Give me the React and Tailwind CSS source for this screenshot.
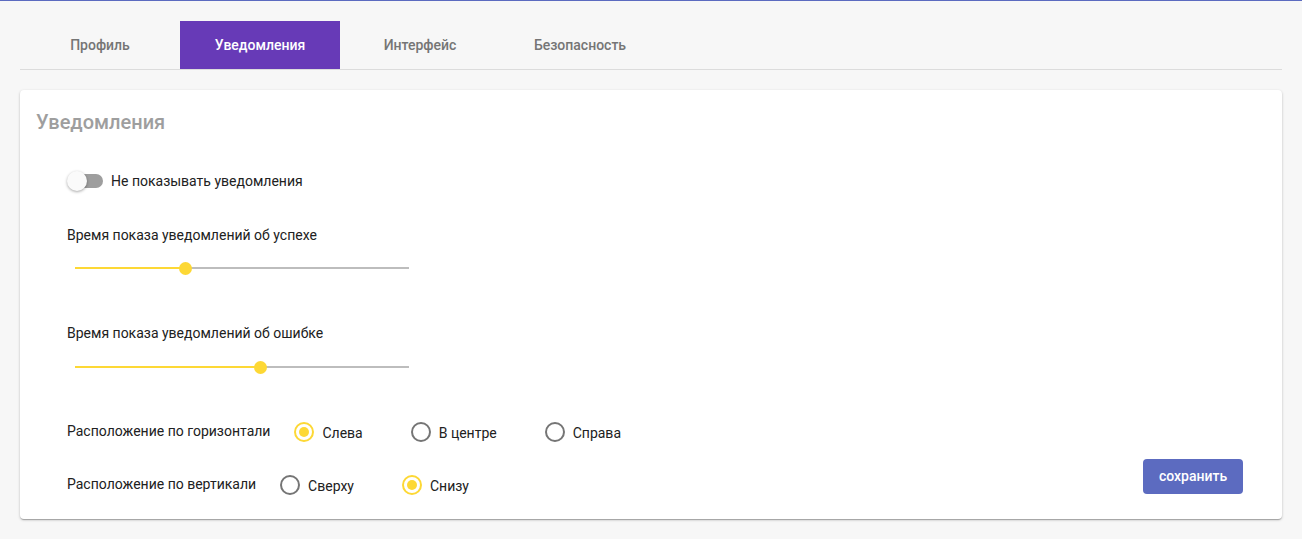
import React from "react";

function Radio({ checked, label }) {
  return (
    <div className="flex items-center mr-[48px]">
      <span
        className={
          "w-[20px] h-[20px] rounded-full border-2 flex items-center justify-center " +
          (checked ? "border-[#fdd835]" : "border-[#757575]")
        }
      >
        {checked && <span className="w-[10px] h-[10px] rounded-full bg-[#fdd835]" />}
      </span>
      <span className="ml-[8px] mt-[2px] text-[14px] text-[#212121]">{label}</span>
    </div>
  );
}

function Slider({ value }) {
  return (
    <div className="ml-[8px] w-[334px] h-[12px] relative flex items-center">
      <div className="w-full h-[2px] bg-[#bdbdbd]" />
      <div className="absolute left-0 h-[2px] bg-[#fdd835]" style={{ width: value + "px" }} />
      <div
        className="absolute w-[13px] h-[13px] rounded-full bg-[#fdd835]"
        style={{ left: value - 6.5 + "px" }}
      />
    </div>
  );
}

export default function App() {
  const tabs = ["Профиль", "Уведомления", "Интерфейс", "Безопасность"];
  return (
    <div
      className="w-[1302px] h-[539px] bg-[#f7f7f7] border-t border-[#5c6bc0] overflow-hidden"
      style={{ fontFamily: "Roboto, 'Noto Sans', sans-serif" }}
    >
      <div className="mx-[20px] mt-[20px] flex border-b border-[#dcdcdc] h-[49px]">
        {tabs.map((t, i) => (
          <div
            key={t}
            className={
              "w-[160px] h-[48px] flex items-center justify-center text-[14px] font-medium " +
              (i === 1 ? "bg-[#673ab7] text-white" : "text-[#757575]")
            }
          >
            {t}
          </div>
        ))}
      </div>
      <div className="mx-[20px] mt-[20px] bg-white rounded-[4px] shadow-[0_1px_3px_rgba(0,0,0,0.2),0_1px_1px_rgba(0,0,0,0.14),0_2px_1px_-1px_rgba(0,0,0,0.12)] pt-[16px] pb-[22px] pl-[16px] pr-[39px] flex">
        <div className="flex-1">
          <div className="text-[20px] leading-[32px] font-medium text-[#9e9e9e]">Уведомления</div>
          <div className="pl-[31px]">
            <div className="mt-[33px] flex items-center h-[20px]">
              <div className="relative w-[36px] h-[20px] flex items-center">
                <div className="w-[34px] h-[14px] rounded-full bg-[#9e9e9e] ml-[2px]" />
                <div className="absolute left-0 top-0 w-[20px] h-[20px] rounded-full bg-[#fafafa] shadow-[0_1px_3px_rgba(0,0,0,0.35)]" />
              </div>
              <span className="ml-[8px] text-[14px] text-[#212121]">Не показывать уведомления</span>
            </div>
            <div className="mt-[34px] text-[14px] leading-[20px] text-[#212121]">
              Время показа уведомлений об успехе
            </div>
            <div className="mt-[17px]">
              <Slider value={110} />
            </div>
            <div className="mt-[49px] text-[14px] leading-[20px] text-[#212121]">
              Время показа уведомлений об ошибке
            </div>
            <div className="mt-[18px]">
              <Slider value={185} />
            </div>
            <div className="mt-[47px] flex items-center h-[24px]">
              <span className="text-[14px] text-[#212121] mr-[24px] -mt-[2px]">Расположение по горизонтали</span>
              <Radio checked label="Слева" />
              <Radio label="В центре" />
              <Radio label="Справа" />
            </div>
            <div className="mt-[29px] flex items-center h-[24px]">
              <span className="text-[14px] text-[#212121] mr-[24px] -mt-[2px]">Расположение по вертикали</span>
              <Radio label="Сверху" />
              <Radio checked label="Снизу" />
            </div>
          </div>
        </div>
        <div className="self-end mb-[3px]">
          <button className="w-[100px] h-[35px] rounded-[4px] bg-[#5c6bc0] text-white text-[14px] font-medium">
            сохранить
          </button>
        </div>
      </div>
    </div>
  );
}
